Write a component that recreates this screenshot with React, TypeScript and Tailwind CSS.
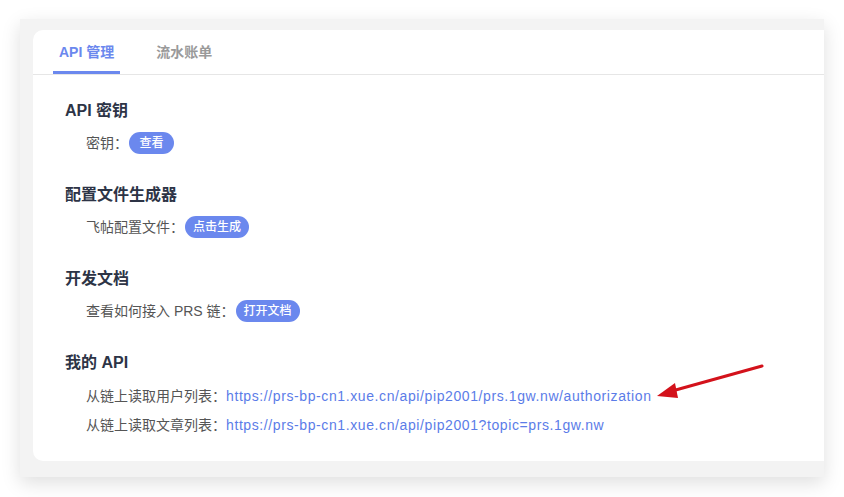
import React from "react";

const font = { fontFamily: '"Helvetica Neue", "Liberation Sans", "Noto Sans CJK SC", sans-serif' };

function Btn({ children }: { children: React.ReactNode }) {
  return (
    <span className="inline-flex h-[22px] min-w-[45px] items-center justify-center rounded-full bg-[#6b88ee] px-2 text-[12px] font-medium text-white">
      {children}
    </span>
  );
}

function Section({ title, children, last }: { title: string; children: React.ReactNode; last?: boolean }) {
  return (
    <div className={last ? "" : "mb-[29px]"}>
      <div className="h-6 text-[16px] font-bold leading-6 text-[#2d3446]">{title}</div>
      {children}
    </div>
  );
}

export default function App() {
  return (
    <div className="relative h-[497px] w-[844px] overflow-hidden bg-white" style={font}>
      <div className="ml-[20px] mt-[19px] h-[458px] w-[804px] bg-[#f3f3f3] pl-[13px] pt-[11px] shadow-[0_6px_18px_rgba(0,0,0,0.13)]">
        <div className="h-[431px] rounded-l-[10px] bg-white">
          <div className="flex h-[45px] border-b border-[#e6e6e6] pl-[20px]">
            <div className="flex flex-col">
              <div className="flex h-[41px] items-center px-[6px] pt-[4px] text-[14px] font-bold text-[#6b88ee]">API 管理</div>
              <div className="h-[3px] bg-[#6b88ee]" />
            </div>
            <div className="ml-[31px] flex h-[41px] items-center px-[5px] pt-[4px] text-[14px] font-bold text-[#9a9a9a]">流水账单</div>
          </div>
          <div className="pl-[32px] pt-[24px]">
            <Section title="API 密钥">
              <div className="mt-[9px] flex h-[22px] items-center pl-[21px] text-[14px] text-[#555]">
                <span>密钥：</span>
                <span className="ml-px"><Btn>查看</Btn></span>
              </div>
            </Section>
            <Section title="配置文件生成器">
              <div className="mt-[9px] flex h-[22px] items-center pl-[21px] text-[14px] text-[#555]">
                <span>飞帖配置文件：</span>
                <span className="ml-px"><Btn>点击生成</Btn></span>
              </div>
            </Section>
            <Section title="开发文档">
              <div className="mt-[9px] flex h-[22px] items-center pl-[21px] text-[14px] text-[#555]">
                <span>查看如何接入 PRS 链：</span>
                <span className="ml-px"><Btn>打开文档</Btn></span>
              </div>
            </Section>
            <Section title="我的 API" last>
              <div className="mt-[10px] flex flex-col gap-[7px] pl-[21px] text-[14px] text-[#555]">
                <div className="flex h-[22px] items-center">
                  <span>从链上读取用户列表：</span>
                  <span className="tracking-[0.6px] text-[#5b7ce8]">https://prs-bp-cn1.xue.cn/api/pip2001/prs.1gw.nw/authorization</span>
                </div>
                <div className="flex h-[22px] items-center">
                  <span>从链上读取文章列表：</span>
                  <span className="tracking-[0.6px] text-[#5b7ce8]">https://prs-bp-cn1.xue.cn/api/pip2001?topic=prs.1gw.nw</span>
                </div>
              </div>
            </Section>
          </div>
        </div>
      </div>
      <svg className="pointer-events-none absolute left-0 top-0" width="844" height="497" viewBox="0 0 844 497">
        <line x1="762" y1="366" x2="672" y2="391" stroke="#d3121b" strokeWidth="3" strokeLinecap="round" />
        <polygon points="657,396 675,383 678,398" fill="#d3121b" />
      </svg>
    </div>
  );
}
